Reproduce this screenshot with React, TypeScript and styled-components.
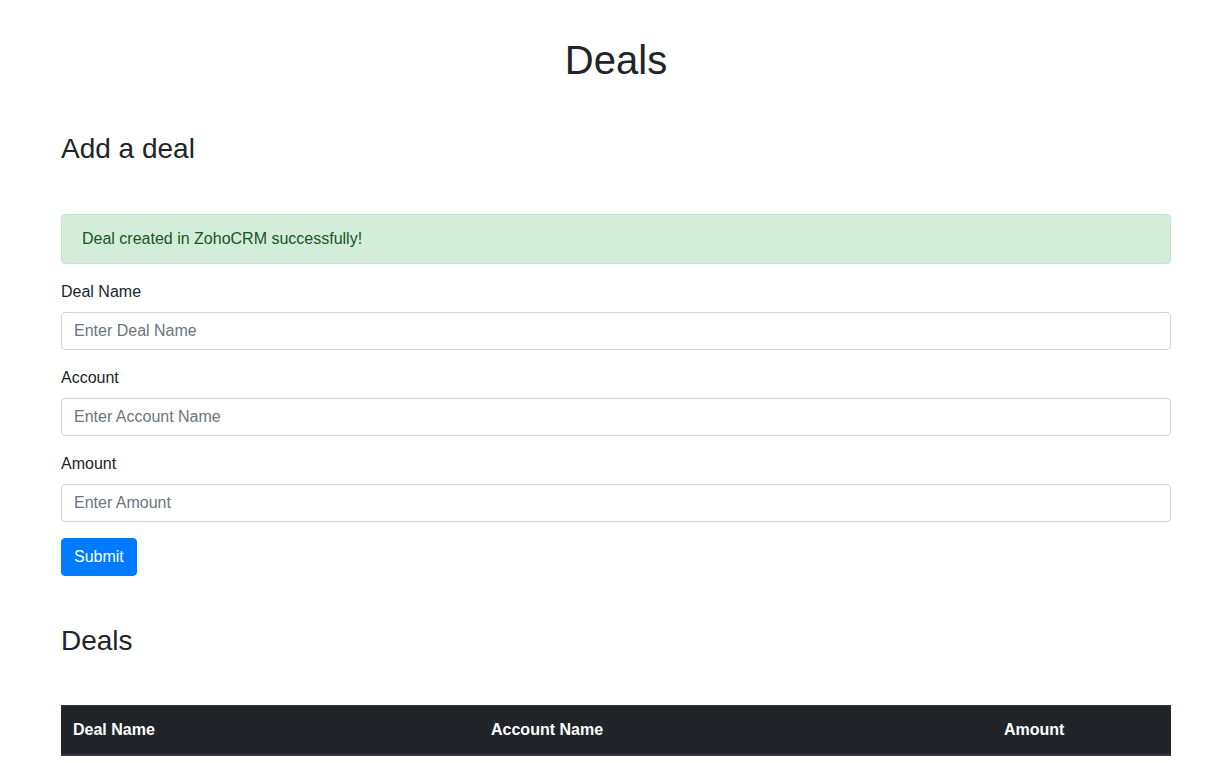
import styled, { createGlobalStyle } from 'styled-components'

const GlobalStyle = createGlobalStyle`
	* {
		box-sizing: border-box;
	}
	body {
		margin: 0;
		padding: 36px 0 0 8px;
		font-family: 'Liberation Sans', Arial, sans-serif;
		font-size: 16px;
		line-height: 1.5;
		color: #212529;
		background: #fff;
	}
`

const Container = styled.div`
	width: 100%;
	max-width: 1140px;
	margin: 0 auto;
	padding: 0 15px;
`

const Title = styled.h1`
	margin: 0 0 48px;
	font-size: 40px;
	font-weight: 500;
	line-height: 1.2;
	text-align: center;
`

const SectionHeading = styled.h3<{ $top?: number }>`
	margin: ${(p) => p.$top ?? 0}px 0 48px;
	font-size: 28px;
	font-weight: 500;
	line-height: 1.2;
`

const Alert = styled.div`
	padding: 12px 20px;
	margin-bottom: 16px;
	border: 1px solid #c3e6cb;
	border-radius: 4px;
	background: #d4edda;
	color: #155724;
`

const FormGroup = styled.div`
	margin-bottom: 16px;
`

const Label = styled.label`
	display: inline-block;
	margin-bottom: 8px;
`

const Input = styled.input`
	display: block;
	width: 100%;
	height: 38px;
	padding: 6px 12px;
	font-family: inherit;
	font-size: 16px;
	line-height: 1.5;
	color: #495057;
	background: #fff;
	border: 1px solid #ced4da;
	border-radius: 4px;
	&::placeholder {
		color: #6c757d;
	}
`

const Button = styled.button`
	display: inline-block;
	height: 38px;
	padding: 6px 12px;
	font-family: inherit;
	font-size: 16px;
	line-height: 1.5;
	color: #fff;
	background: #007bff;
	border: 1px solid #007bff;
	border-radius: 4px;
	cursor: pointer;
`

const Table = styled.table`
	width: 100%;
	border-collapse: collapse;
	margin-bottom: 16px;
`

const HeadCell = styled.th<{ $width: number }>`
	width: ${(p) => p.$width}px;
	padding: 12px;
	text-align: left;
	font-weight: 700;
	color: #fff;
	background: #212529;
	border-top: 1px solid #32383e;
	border-bottom: 2px solid #32383e;
`

const fields = [
	{ id: 'dealName', label: 'Deal Name', placeholder: 'Enter Deal Name' },
	{ id: 'account', label: 'Account', placeholder: 'Enter Account Name' },
	{ id: 'amount', label: 'Amount', placeholder: 'Enter Amount' },
]

const App = (): JSX.Element => {
	return (
		<>
			<GlobalStyle />
			<Container>
				<Title>Deals</Title>
				<SectionHeading>Add a deal</SectionHeading>
				<Alert>Deal created in ZohoCRM successfully!</Alert>
				<form onSubmit={(e) => e.preventDefault()}>
					{fields.map((f) => (
						<FormGroup key={f.id}>
							<Label htmlFor={f.id}>{f.label}</Label>
							<Input id={f.id} type='text' placeholder={f.placeholder} />
						</FormGroup>
					))}
					<Button type='submit'>Submit</Button>
				</form>
				<SectionHeading $top={48}>Deals</SectionHeading>
				<Table>
					<thead>
						<tr>
							<HeadCell $width={418}>Deal Name</HeadCell>
							<HeadCell $width={513}>Account Name</HeadCell>
							<HeadCell $width={179}>Amount</HeadCell>
						</tr>
					</thead>
					<tbody />
				</Table>
			</Container>
		</>
	)
}

export default App
